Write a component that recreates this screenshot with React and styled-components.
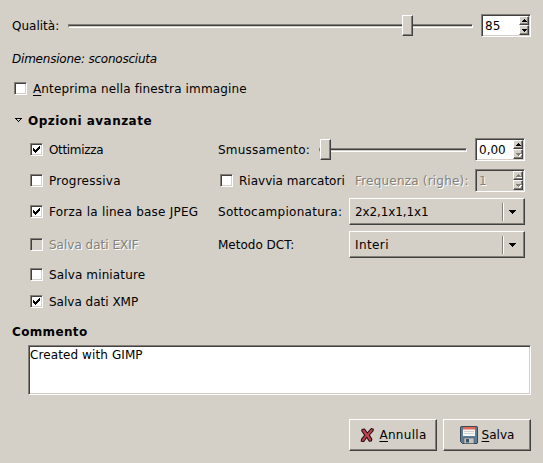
import React from 'react';
import styled, { createGlobalStyle, css } from 'styled-components';

const Global = createGlobalStyle`
  * { box-sizing: border-box; }
  body { margin: 0; background: #d4d0c8; }
`;

const Dialog = styled.main`
  width: 543px;
  height: 463px;
  padding: 14px 12px 0;
  background: #d4d0c8;
  color: #000;
  font: 12px/16px "DejaVu Sans", sans-serif;
  white-space: nowrap;
  overflow: hidden;
`;

const Text = styled.span`
  letter-spacing: ${(p) => p.$ls || 0}px;
  ${(p) => p.$disabled && css`
    color: #848078;
    text-shadow: 1px 1px 0 #fff;
  `}
`;

const Mnemonic = styled.span`
  text-decoration: underline;
  text-decoration-thickness: 1px;
  text-underline-offset: 2px;
`;

const QualityRow = styled.div`
  display: grid;
  grid-template-columns: 56px 405px 1fr;
  align-items: center;
  width: 519px;
  height: 23px;
`;

const Track = styled.div`
  display: flex;
  align-items: center;
  height: 4px;
  border: 1px solid;
  border-color: #848078 #fff #fff #848078;
  background: linear-gradient(#404040 50%, #d4d0c8 50%);
`;

const Thumb = styled.div`
  flex: none;
  width: 11px;
  height: 21px;
  margin-left: ${(p) => p.$at}px;
  border: 1px solid;
  border-color: #fff #404040 #404040 #fff;
  box-shadow: inset -1px -1px #848078;
  background: #d4d0c8;
`;

const Sunken = styled.div`
  border: 1px solid;
  border-color: #848078 #fff #fff #848078;
  box-shadow: inset 1px 1px #404040, inset -1px -1px #d4d0c8;
  background: ${(p) => (p.$disabled ? '#d4d0c8' : '#fff')};
`;

const SpinFrame = styled(Sunken)`
  display: flex;
  flex: none;
  justify-content: space-between;
  align-items: center;
  width: 50px;
  height: 23px;
  margin-left: ${(p) => (p.$attached ? '8px' : 'auto')};
  padding: 1px 1px 1px 3px;
`;

const Steppers = styled.div`
  display: grid;
  grid-template-rows: 9px 10px;
  width: 10px;
  height: 19px;
`;

const Step = styled.div`
  display: flex;
  justify-content: center;
  align-items: center;
  border: 1px solid;
  border-color: #fff #404040 #404040 #fff;
  box-shadow: inset -1px -1px #848078;
  background: #d4d0c8;
`;

const Box = styled(Sunken)`
  flex: none;
  width: 13px;
  height: 13px;
  padding: 1px;
`;

const CheckRow = styled.label`
  display: flex;
  align-items: center;
  gap: 6px;
`;

const SizeLine = styled.div`
  margin-top: 14px;
  font-style: italic;
`;

const PreviewRow = styled(CheckRow)`
  align-items: flex-start;
  height: 16px;
  margin: 14px 0 0 2px;

  ${Box} {
    margin-top: 1px;
  }
`;

const Heading = styled.div`
  display: flex;
  align-items: center;
  font-weight: bold;
`;

const Expander = styled(Heading)`
  gap: 6px;
  margin: 16px 0 9px 3px;
`;

const Columns = styled.div`
  display: grid;
  grid-template-columns: 188px 307px;
  height: 186px;
  margin-left: 18px;
`;

const LeftOptions = styled.div`
  display: grid;
  grid-template-rows: 23px 39px 23px 43px 17px 37px;
  align-content: start;
  align-items: center;
`;

const RightRow = styled.div`
  display: flex;
  align-items: center;
  height: ${(p) => p.$h || 23}px;
  margin-bottom: ${(p) => p.$gap || 6}px;
`;

const SmoothScale = styled.div`
  width: 148px;
  margin-left: auto;
`;

const RestartCheck = styled(CheckRow)`
  width: 135px;
  margin-left: 2px;
`;

const Combo = styled.div`
  display: flex;
  align-items: center;
  width: 176px;
  height: 27px;
  margin-left: auto;
  padding-left: 5px;
  border: 1px solid;
  border-color: #fff #404040 #404040 #fff;
  box-shadow: inset -1px -1px #848078;
`;

const ComboArrow = styled.div`
  display: flex;
  align-items: center;
  justify-content: center;
  width: 22px;
  height: 18px;
  margin-left: auto;
  padding-right: 2px;
  border-left: 1px solid #848078;
  box-shadow: inset 1px 0 #fff;
`;

const Comment = styled(Sunken)`
  width: 503px;
  height: 50px;
  margin: 5px 0 0 16px;
  padding: 1px;
`;

const Actions = styled.div`
  display: flex;
  justify-content: flex-end;
  gap: 6px;
  margin-top: 24px;
`;

const Button = styled.button`
  display: flex;
  justify-content: center;
  align-items: center;
  gap: 4px;
  width: 88px;
  height: 32px;
  padding: 0;
  border: 1px solid;
  border-color: #fff #404040 #404040 #fff;
  box-shadow: inset -1px -1px #848078;
  background: #d4d0c8;
  color: #000;
  font: inherit;
`;

const Svg = styled.svg`
  display: block;
  flex: none;
  overflow: visible;
  shape-rendering: crispEdges;
`;

const Triangle = styled(Svg)`
  margin-bottom: 2px;
`;

const stepPath = {
  up: 'M2 0h1v1h1v1h1v1h-5v-1h1v-1h1z',
  down: 'M0 0h5v1h-1v1h-1v1h-1v-1h-1v-1h-1z',
};

const StepArrow = ({ dir, disabled }) => (
  <Svg width="5" height="3" viewBox="0 0 5 3">
    {disabled && <path d={stepPath[dir]} fill="#fff" transform="translate(1 1)" />}
    <path d={stepPath[dir]} fill={disabled ? '#848078' : '#000'} />
  </Svg>
);

const Spin = ({ value, disabled, atMinimum, attached }) => (
  <SpinFrame $disabled={disabled} $attached={attached}>
    <Text $disabled={disabled}>{value}</Text>
    <Steppers>
      <Step><StepArrow dir="up" disabled={disabled} /></Step>
      <Step><StepArrow dir="down" disabled={disabled || atMinimum} /></Step>
    </Steppers>
  </SpinFrame>
);

const Scale = ({ at }) => <Track><Thumb $at={at} /></Track>;

const Check = ({ on, disabled }) => (
  <Box $disabled={disabled}>
    {on && (
      <Svg width="9" height="9" viewBox="0 0 9 9">
        <path d="M7 1h1v3h-1v1h-1v1h-1v1h-1v1h-1v-1h-1v-1h-1v-3h1v1h1v1h1v-1h1v-1h1v-1h1z" />
      </Svg>
    )}
  </Box>
);

const Option = ({ on, disabled, ls, children }) => (
  <CheckRow>
    <Check on={on} disabled={disabled} />
    <Text $ls={ls} $disabled={disabled}>{children}</Text>
  </CheckRow>
);

const Select = ({ children, ls }) => (
  <Combo>
    <Text $ls={ls}>{children}</Text>
    <ComboArrow>
      <Svg width="7" height="4" viewBox="0 0 7 4"><path d="M0 0h7v1h-1v1h-1v1h-1v1h-1v-1h-1v-1h-1v-1h-1z" /></Svg>
    </ComboArrow>
  </Combo>
);

const CancelIcon = () => (
  <svg width="16" height="18" viewBox="0 0 16 18">
    <path d="M3 3.500L5.500 3l2.800 4 4-4.500 2 .7-.3 1.800-3.700 4 2.500 4-.5 2-2 .3-2.600-4-2.900 4.200-2.500-.3.300-2 3.200-4-3-4.200z" fill="#bf4350" stroke="#250a0e" strokeWidth="1.100" strokeLinejoin="round" />
  </svg>
);

const SaveIcon = () => (
  <svg width="18" height="18" viewBox="0 0 18 18">
    <path d="M1 .5h16l.5.5v16l-.5.5H2.500l-2-2V1z" fill="#5a7d98" stroke="#3c4650" />
    <path d="M3 1h12v9H3z" fill="#f6f6f4" />
    <path d="M3 1h12v2.500H3z" fill="#e0685a" />
    <path d="M4 5.500h10M4 7.500h10" stroke="#cfcfcf" />
    <path d="M4 12h10v5.500H4z" fill="#c3c5c0" stroke="#4d5962" strokeWidth=".6" />
    <path d="M6 13h3v3.500H6z" fill="#3f5262" />
  </svg>
);

export default function App() {
  return (
    <>
      <Global />
      <Dialog>
        <QualityRow>
          <Text>Qualità:</Text>
          <Scale at={333} />
          <Spin value="85" />
        </QualityRow>
        <SizeLine><Text $ls={-0.22}>Dimensione: sconosciuta</Text></SizeLine>
        <PreviewRow>
          <Check />
          <Text $ls={0.14}><Mnemonic>A</Mnemonic>nteprima nella finestra immagine</Text>
        </PreviewRow>
        <Expander>
          <Triangle width="7" height="4" viewBox="0 0 7 4">
            <path d="M0 0h7v1h-1v1h-1v1h-1v1h-1v-1h-1v-1h-1v-1h-1z" />
            <path d="M2 1h3v1h-1v1h-1v-1h-1z" fill="#d4d0c8" />
          </Triangle>
          <Text $ls={0.47}>Opzioni avanzate</Text>
        </Expander>
        <Columns>
          <LeftOptions>
            <Option on ls={-0.33}>Ottimizza</Option>
            <Option ls={0.25}>Progressiva</Option>
            <Option on ls={0.24}>Forza la linea base JPEG</Option>
            <Option disabled>Salva dati EXIF</Option>
            <Option ls={0.13}>Salva miniature</Option>
            <Option on>Salva dati XMP</Option>
          </LeftOptions>
          <div>
            <RightRow $gap={8}>
              <Text $ls={0.2}>Smussamento:</Text>
              <SmoothScale><Scale at={0} /></SmoothScale>
              <Spin value="0,00" atMinimum attached />
            </RightRow>
            <RightRow>
              <RestartCheck><Check /><Text>Riavvia marcatori</Text></RestartCheck>
              <Text $disabled $ls={0.2}>Frequenza (righe):</Text>
              <Spin value="1" disabled />
            </RightRow>
            <RightRow $h={27}><Text $ls={0.28}>Sottocampionatura:</Text><Select ls={-0.12}>2x2,1x1,1x1</Select></RightRow>
            <RightRow $h={27}><Text>Metodo DCT:</Text><Select ls={0.4}>Interi</Select></RightRow>
          </div>
        </Columns>
        <Heading><Text $ls={0.35}>Commento</Text></Heading>
        <Comment><Text $ls={0.1}>Created with GIMP</Text></Comment>
        <Actions>
          <Button><CancelIcon /><Text $ls={0.3}><Mnemonic>A</Mnemonic>nnulla</Text></Button>
          <Button><SaveIcon /><Text><Mnemonic>S</Mnemonic>alva</Text></Button>
        </Actions>
      </Dialog>
    </>
  );
}
